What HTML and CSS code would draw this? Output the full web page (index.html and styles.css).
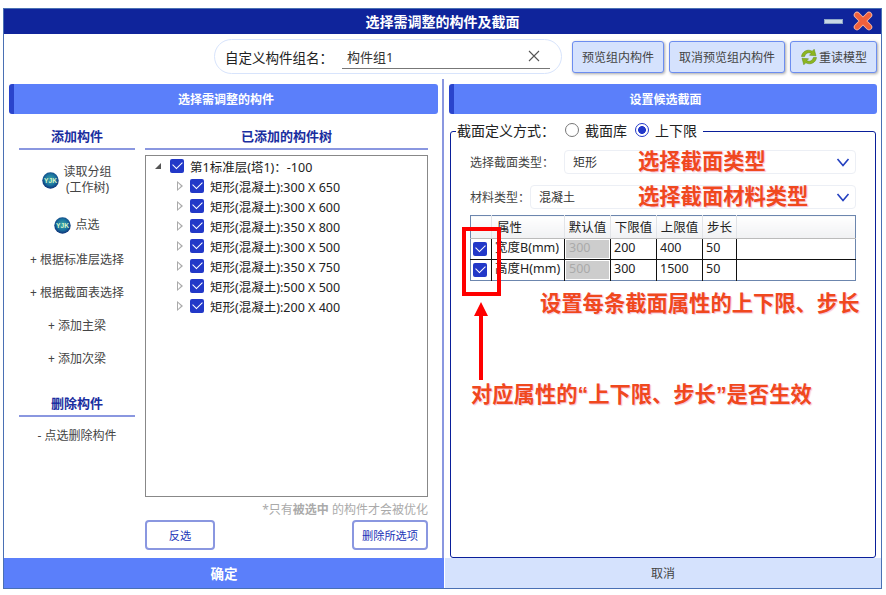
FILE: index.html
```html
<!DOCTYPE html>
<html lang="zh-CN">
  <head>
    <meta charset="UTF-8" />
    <meta name="viewport" content="width=device-width, initial-scale=1.0" />
    <title>选择需调整的构件及截面</title>
    <link rel="stylesheet" href="styles.css">
  </head>

  <body>
    <svg class="defs" width="0" height="0">
      <defs>
        <radialGradient id="globe" cx="50%" cy="45%" r="55%">
          <stop offset="0%" stop-color="#3fa8a4" />
          <stop offset="60%" stop-color="#1a74a0" />
          <stop offset="100%" stop-color="#0d3078" />
        </radialGradient>
        <symbol id="yjk" viewBox="0 0 18 18">
          <circle cx="9" cy="9" r="8.7" fill="url(#globe)" />
          <text x="9" y="11.7" text-anchor="middle" class="yjk_text">YJK</text>
        </symbol>
      </defs>
    </svg>

    <div class="window">
      <!-- Title bar -->
      <div class="titlebar">
        <span>选择需调整的构件及截面</span>
        <div class="win_btns">
          <div class="win_min"></div>
          <svg width="20" height="20" viewBox="0 0 20 20">
            <path d="M4 4 L16 16 M16 4 L4 16" stroke="#f9b8a2" stroke-width="6.5" stroke-linecap="round" fill="none" />
            <path d="M4 4 L16 16 M16 4 L4 16" stroke="#f0603c" stroke-width="4.8" stroke-linecap="round" fill="none" />
          </svg>
        </div>
      </div>

      <!-- Name row -->
      <div class="toolbar">
        <div class="name_box">
          <span class="name_label">自定义构件组名：</span>
          <div class="name_input">
            <span>构件组1</span>
            <svg width="12" height="12" viewBox="0 0 12 12">
              <path d="M1 1 L11 11 M11 1 L1 11" stroke="#555" stroke-width="1.1" fill="none" />
            </svg>
          </div>
        </div>
        <button class="tool_btn btn_preview">预览组内构件</button>
        <button class="tool_btn btn_cancel">取消预览组内构件</button>
        <button class="tool_btn btn_reload">
          <svg width="18" height="18" viewBox="0 0 18 18">
            <path d="M1.5 8.5 C2 3.5 7.5 0.5 12.2 3.2 L14.2 1.2 L16 7.8 L9.4 7.2 L11.2 5.4 C8.5 4 5.8 5 4.6 8.5 Z" fill="#8cb520" stroke="#5f8a12" stroke-width="0.5" />
            <path d="M16.5 9.5 C16 14.5 10.5 17.5 5.8 14.8 L3.8 16.8 L2 10.2 L8.6 10.8 L6.8 12.6 C9.5 14 12.2 13 13.4 9.5 Z" fill="#8cb520" stroke="#5f8a12" stroke-width="0.5" />
          </svg>
          重读模型
        </button>
      </div>

      <div class="main">
        <!-- Left side -->
        <div class="side side_left">
          <div class="panel_head">选择需调整的构件</div>
          <div class="left_body">
            <div class="add_col">
              <div class="col_head">添加构件</div>
              <div class="action action_read">
                <svg width="17" height="17"><use href="#yjk" /></svg>
                <span>读取分组<br />(工作树)</span>
              </div>
              <div class="action action_pick">
                <svg width="17" height="17"><use href="#yjk" /></svg>
                <span>点选</span>
              </div>
              <div class="action">+ 根据标准层选择</div>
              <div class="action">+ 根据截面表选择</div>
              <div class="action">+ 添加主梁</div>
              <div class="action">+ 添加次梁</div>
              <div class="col_head col_head_del">删除构件</div>
              <div class="action action_del">- 点选删除构件</div>
            </div>

            <div class="tree_col">
              <div class="col_head">已添加的构件树</div>
              <div class="tree">
                <div class="tree_row tree_root">
                  <span class="arrow_open"></span>
                  <span class="check"></span>
                  <span>第1标准层(塔1)：-100</span>
                </div>
                <div class="tree_row"><span class="arrow"></span><span class="check"></span><span>矩形(混凝土):300 X 650</span></div>
                <div class="tree_row"><span class="arrow"></span><span class="check"></span><span>矩形(混凝土):300 X 600</span></div>
                <div class="tree_row"><span class="arrow"></span><span class="check"></span><span>矩形(混凝土):350 X 800</span></div>
                <div class="tree_row"><span class="arrow"></span><span class="check"></span><span>矩形(混凝土):300 X 500</span></div>
                <div class="tree_row"><span class="arrow"></span><span class="check"></span><span>矩形(混凝土):350 X 750</span></div>
                <div class="tree_row"><span class="arrow"></span><span class="check"></span><span>矩形(混凝土):500 X 500</span></div>
                <div class="tree_row"><span class="arrow"></span><span class="check"></span><span>矩形(混凝土):200 X 400</span></div>
              </div>
              <div class="hint">*只有<b>被选中</b> 的构件才会被优化</div>
              <div class="tree_btns">
                <button class="line_btn btn_invert">反选</button>
                <button class="line_btn btn_delete">删除所选项</button>
              </div>
            </div>
          </div>
        </div>

        <!-- Right side -->
        <div class="side side_right">
          <div class="panel_head">设置候选截面</div>
          <fieldset class="section_box">
            <legend>
              <span class="legend_label">截面定义方式：</span>
              <span class="radio"></span><span class="radio_text">截面库</span>
              <span class="radio radio_on"></span><span>上下限</span>
            </legend>

            <div class="field field_type">
              <span class="field_label">选择截面类型：</span>
              <div class="select">
                <span>矩形</span>
                <svg width="14" height="9" viewBox="0 0 14 9"><path d="M1.5 1 L7 7.5 L12.5 1" fill="none" stroke="#2440c0" stroke-width="1.6" /></svg>
              </div>
            </div>
            <div class="field field_mat">
              <span class="field_label">材料类型：</span>
              <div class="select">
                <span>混凝土</span>
                <svg width="14" height="9" viewBox="0 0 14 9"><path d="M1.5 1 L7 7.5 L12.5 1" fill="none" stroke="#2440c0" stroke-width="1.6" /></svg>
              </div>
            </div>

            <table class="props">
              <thead>
                <tr>
                  <th class="c_check"></th>
                  <th class="c_name">属性</th>
                  <th class="c_def">默认值</th>
                  <th class="c_num">下限值</th>
                  <th class="c_num">上限值</th>
                  <th class="c_step">步长</th>
                  <th></th>
                </tr>
              </thead>
              <tbody>
                <tr>
                  <td class="c_check"><span class="check"></span></td>
                  <td>宽度B(mm)</td>
                  <td class="c_def"><span class="readonly">300</span></td>
                  <td>200</td>
                  <td>400</td>
                  <td>50</td>
                  <td></td>
                </tr>
                <tr>
                  <td class="c_check"><span class="check"></span></td>
                  <td>高度H(mm)</td>
                  <td class="c_def"><span class="readonly">500</span></td>
                  <td>300</td>
                  <td>1500</td>
                  <td>50</td>
                  <td></td>
                </tr>
              </tbody>
            </table>
          </fieldset>
        </div>
      </div>

      <div class="footer">
        <div class="ok">确定</div>
        <div class="cancel">取消</div>
      </div>
    </div>

    <!-- Annotations drawn over the dialog -->
    <div class="note note_type">选择截面类型</div>
    <div class="note note_mat">选择截面材料类型</div>
    <div class="note note_limit">设置每条截面属性的上下限、步长</div>
    <div class="note note_check">对应属性的“上下限、步长”是否生效</div>
    <div class="red_box"></div>
    <svg class="red_arrow" width="16" height="78" viewBox="0 0 16 78">
      <path d="M8 0 L15 14 L10 14 L10 78 L6 78 L6 14 L1 14 Z" fill="#f00" />
    </svg>
  </body>
</html>
```

FILE: styles.css
```css
* {
  box-sizing: border-box;
}

body {
  margin: 0;
  height: 595px;
  position: relative;
  background: #fff;
  font-family: "Noto Sans", "Noto Sans CJK SC", sans-serif;
  font-size: 12px;
  color: #333;
  overflow: hidden;
}

.defs {
  position: absolute;
}

.yjk_text {
  font-family: "Liberation Sans", sans-serif;
  font-size: 7px;
  font-weight: 700;
  fill: #d8f5c8;
}

.window {
  margin: 8px 0 0 3px;
  width: 879px;
  height: 581px;
  border: 1px solid #4a70b4;
  display: flex;
  flex-direction: column;
  background: #fff;
}

/* Title */
.titlebar {
  height: 25px;
  flex: none;
  padding-bottom: 2px;
  background: #0f249b;
  color: #fff;
  font-size: 14px;
  font-weight: 700;
  display: flex;
  align-items: center;
  justify-content: center;
  position: relative;
}

.win_btns {
  position: absolute;
  right: 8px;
  top: 2px;
  display: flex;
  align-items: center;
  gap: 10px;
}

.win_min {
  width: 19px;
  height: 5px;
  background: #c8d8e4;
  border: 1px solid #8ea6c8;
}

/* Name row */
.toolbar {
  height: 45px;
  flex: none;
  display: flex;
  align-items: center;
  padding: 0 4px 0 210px;
}

.name_box {
  width: 348px;
  height: 35px;
  border: 1px solid #d8e4fc;
  border-radius: 18px;
  display: flex;
  align-items: center;
  padding-left: 10px;
  margin-right: 10px;
  font-size: 13.5px;
}

.name_label {
  width: 117px;
  flex: none;
  white-space: nowrap;
  color: #222;
}

.name_input {
  width: 208px;
  height: 24px;
  border-bottom: 1px solid #777;
  display: flex;
  align-items: center;
  justify-content: space-between;
  padding: 0 10px 0 5px;
  font-size: 13px;
}

.tool_btn {
  height: 32px;
  padding: 0;
  border: 1px solid #6c8df0;
  border-radius: 3px;
  background: #d5e2fd;
  color: #444;
  font-family: inherit;
  font-size: 12px;
  box-shadow: 1px 1px 3px rgba(0, 0, 0, 0.35);
  display: flex;
  align-items: center;
  justify-content: center;
}

.btn_preview {
  width: 92px;
  margin-right: 5px;
}

.btn_cancel {
  width: 116px;
  margin-right: 5px;
}

.btn_reload {
  width: 87px;
  gap: 1px;
}

/* Main */
.main {
  flex: 1;
  display: flex;
  min-height: 0;
}

.side {
  padding-top: 5px;
}

.side_left {
  width: 440px;
  padding-left: 5px;
  padding-right: 4px;
  border-right: 2px solid #8a97e0;
}

.side_right {
  flex: 1;
  padding-left: 5px;
  padding-right: 4px;
}

.panel_head {
  height: 30px;
  border-radius: 3px;
  border-left: 5px solid #2a44cc;
  background: #5b7ffa;
  color: #fff;
  font-size: 12px;
  font-weight: 700;
  display: flex;
  align-items: center;
  justify-content: center;
}

.left_body {
  display: flex;
  padding: 13px 10px 0;
  gap: 10px;
}

.add_col {
  width: 116px;
  flex: none;
}

.tree_col {
  flex: 1;
}

.col_head {
  height: 23px;
  border-bottom: 2px solid #8a97e0;
  color: #1a2ea0;
  font-size: 13px;
  line-height: 18px;
  font-weight: 700;
  text-align: center;
}

.action {
  height: 33px;
  display: flex;
  align-items: center;
  justify-content: center;
  gap: 4px;
  line-height: 16px;
  color: #444;
  text-align: center;
}

.action_read {
  height: 44px;
  margin-top: 8px;
}

.action_pick {
  height: 36px;
  margin-top: 5px;
}

.col_head_del {
  margin-top: 19px;
}

.action_del {
  margin-top: 2px;
}

/* Tree */
.tree {
  height: 342px;
  margin-top: 5px;
  border: 1px solid #888;
  font-size: 12.5px;
  color: #222;
}

.tree_row {
  height: 20px;
  display: flex;
  align-items: center;
  padding-left: 31px;
}

.tree_root {
  padding-left: 9px;
}

.arrow {
  width: 6px;
  height: 10px;
  margin-right: 7px;
  background: #aaa;
  clip-path: polygon(0 0, 100% 50%, 0 100%);
  position: relative;
}

.arrow::after {
  content: "";
  position: absolute;
  left: 1px;
  top: 2px;
  width: 3px;
  height: 6px;
  background: #fff;
  clip-path: polygon(0 0, 100% 50%, 0 100%);
}

.arrow_open {
  width: 0;
  height: 0;
  margin-right: 9px;
  border-bottom: 6px solid #555;
  border-left: 6px solid transparent;
}

.check {
  width: 14px;
  height: 14px;
  flex: none;
  margin-right: 6px;
  border-radius: 2px;
  background: #2238c8;
  position: relative;
  display: inline-block;
}

.check::after {
  content: "";
  position: absolute;
  left: 3px;
  top: 2px;
  width: 8px;
  height: 5px;
  border-left: 1.5px solid #fff;
  border-bottom: 1.5px solid #fff;
  transform: rotate(-45deg);
}

.hint {
  margin-top: 4px;
  height: 18px;
  line-height: 18px;
  text-align: right;
  color: #aaa;
  font-size: 12px;
}

.tree_btns {
  display: flex;
  justify-content: space-between;
  margin-top: 1px;
}

.line_btn {
  height: 30px;
  padding: 0;
  border: 2px solid #8a97e0;
  border-radius: 4px;
  background: #fff;
  color: #1a34b8;
  font-family: inherit;
  font-size: 11.2px;
}

.btn_invert {
  width: 70px;
}

.btn_delete {
  width: 76px;
}

/* Section settings */
.section_box {
  margin: 7px 0 0 1px;
  width: 426px;
  height: 437px;
  padding: 0 19px;
  border: 1px solid #0a1f9a;
  border-radius: 3px;
}

.section_box legend {
  padding: 0 6px 3px 1px;
  margin-left: -14px;
  display: flex;
  align-items: center;
  height: 20px;
  font-size: 14px;
  color: #222;
}

.legend_label {
  margin-right: 10px;
}

.radio {
  width: 14px;
  height: 14px;
  margin-right: 6px;
  border: 1.5px solid #777;
  border-radius: 50%;
  display: inline-block;
  flex: none;
}

.radio_text {
  margin-right: 8px;
}

.radio_on {
  border-color: #2238c8;
  background: radial-gradient(circle, #2238c8 0 3.6px, #fff 4.2px);
}

.field {
  height: 24px;
  display: flex;
  align-items: center;
  justify-content: space-between;
  color: #444;
}

.field_type {
  margin-top: 9px;
}

.field_mat {
  margin-top: 11px;
}

.field_type .select {
  width: 292px;
}

.field_mat .select {
  width: 326px;
}

.select {
  height: 24px;
  border: 1px solid #eceff5;
  border-radius: 4px;
  display: flex;
  align-items: center;
  justify-content: space-between;
  padding: 0 5px 0 8px;
  color: #333;
}

.props {
  width: 386px;
  margin-top: 6px;
  border-collapse: collapse;
  table-layout: fixed;
  border: 1px solid #6c86ae;
  color: #222;
  font-size: 12.5px;
}

.props th {
  height: 23px;
  padding: 0 0 2px;
  font-weight: 400;
  border-right: 1px solid #e2e4e8;
  border-bottom: 1px solid #bbb;
  background: linear-gradient(#fff, #f0f1f3);
  text-align: center;
}

.props th.c_name {
  text-align: left;
  padding-left: 5px;
}

.props td {
  height: 21px;
  padding: 0 0 2px 3px;
  border-right: 1px solid #111;
  border-bottom: 1px solid #111;
  line-height: 18px;
}

.props tr:last-child td {
  border-bottom: 0;
}

.props td:last-child,
.props th:last-child {
  border-right: 0;
}

.props .c_check {
  width: 21px;
  padding: 0 0 0 2px;
}

.props .c_check .check {
  display: block;
  margin: 0;
}

.props .c_name {
  width: 73px;
}

.props .c_def {
  width: 46px;
}

.props td.c_def {
  padding: 1px;
}

.props .c_num {
  width: 46px;
}

.props .c_step {
  width: 34px;
}

.readonly {
  display: block;
  height: 18px;
  line-height: 16px;
  padding-left: 3px;
  background: #cdcdcd;
  color: #aaa;
}

/* Footer */
.footer {
  height: 30px;
  flex: none;
  display: flex;
  font-size: 12px;
}

.ok {
  width: 440px;
  background: #5b7ffa;
  color: #fff;
  font-size: 13.5px;
  font-weight: 700;
  display: flex;
  align-items: center;
  justify-content: center;
}

.cancel {
  flex: 1;
  background: #d5e2fd;
  color: #444;
  border-left: 1px solid #fff;
  display: flex;
  align-items: center;
  justify-content: center;
}

/* Annotations */
.note {
  position: absolute;
  font-family: "Noto Sans CJK SC", sans-serif;
  font-size: 21.3px;
  line-height: 26px;
  font-weight: 700;
  color: #f0481e;
  white-space: nowrap;
  text-shadow: 1px 1px 1px #f4c4d8;
}

.note_type {
  left: 638px;
  top: 147px;
}

.note_mat {
  left: 638px;
  top: 182px;
}

.note_limit {
  left: 540px;
  top: 289px;
}

.note_check {
  left: 471px;
  top: 382px;
  font-family: "Liberation Sans", "Noto Sans CJK SC", sans-serif;
}

.red_box {
  position: absolute;
  left: 462px;
  top: 227px;
  width: 39px;
  height: 69px;
  border: 4px solid #f00;
}

.red_arrow {
  position: absolute;
  left: 473px;
  top: 302px;
}
```
